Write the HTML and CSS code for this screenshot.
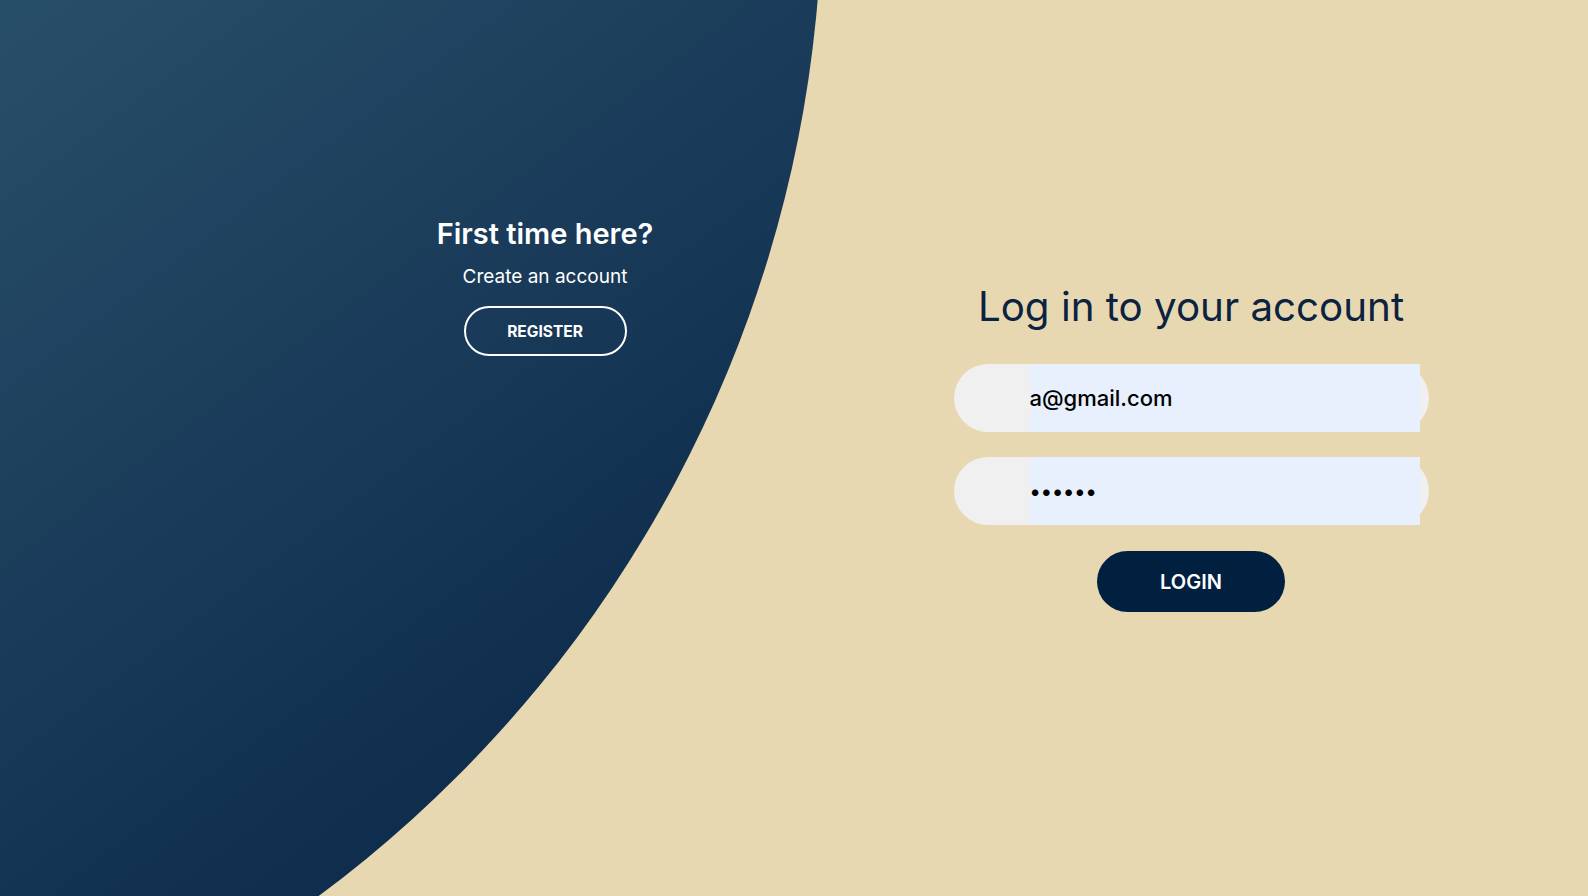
FILE: index.html
```html
<!DOCTYPE html>
<html lang="en">
<head>
<meta charset="utf-8">
<title>Log in</title>
<link rel="stylesheet" href="styles.css">
</head>
<body>
<div class="page">
  <div class="blob"></div>
  <section class="panel-left">
    <h3 class="panel-title">First time here?</h3>
    <p class="panel-text">Create an account</p>
    <button class="btn-outline" type="button">REGISTER</button>
  </section>
  <section class="panel-right">
    <form class="login-form">
      <h2 class="form-title">Log in to your account</h2>
      <div class="input-field">
        <span class="icon"></span>
        <input type="email" value="a@gmail.com">
      </div>
      <div class="input-field">
        <span class="icon"></span>
        <input type="password" value="123456">
      </div>
      <button class="btn-solid" type="button">LOGIN</button>
    </form>
  </section>
</div>
</body>
</html>
```
FILE: styles.css
```css
* { box-sizing: border-box; }
html, body { margin: 0; padding: 0; }
body {
  background: #e8d8b1;
  font-family: Inter, "Noto Sans", sans-serif;
  overflow: hidden;
}
.page {
  position: relative;
  height: 100vh;
  display: grid;
  grid-template-columns: 1fr 1fr;
}
.blob {
  position: absolute;
  inset: 0;
  clip-path: circle(1245px at -423px -104px);
  background: linear-gradient(143deg, #284f6a 0%, #0f2d4d 54%, #04213f 100%);
  z-index: 0;
}
.panel-left {
  position: relative;
  z-index: 1;
  display: flex;
  flex-direction: column;
  align-items: center;
  padding-top: 216px;
  padding-left: 296px;
  color: #fff;
}
.panel-title {
  margin: 0;
  font-size: 29px;
  line-height: 36px;
  font-weight: 600;
}
.panel-text {
  margin: 13px 0 0;
  font-size: 19px;
  line-height: 23px;
  font-weight: 400;
}
.btn-outline {
  margin-top: 18px;
  width: 163px;
  height: 50px;
  border: 2px solid #fff;
  border-radius: 25px;
  background: transparent;
  color: #fff;
  font-family: Inter, sans-serif;
  font-size: 15.5px;
  font-weight: 700;
}
.panel-right {
  position: relative;
  z-index: 1;
  display: flex;
  justify-content: center;
  padding-top: 281px;
}
.login-form {
  display: flex;
  flex-direction: column;
  align-items: center;
}
.form-title {
  margin: 0 0 31px;
  font-size: 40.3px;
  line-height: 52px;
  font-weight: 400;
  color: #0b2240;
}
.input-field {
  width: 475px;
  height: 68px;
  border-radius: 34px;
  background: #f0f0f0;
  display: grid;
  grid-template-columns: 67px 1fr;
  padding: 0 9px;
  margin-bottom: 25px;
}
.input-field input {
  border: none;
  outline: none;
  padding: 0;
  height: 68px;
  background: #e8f0fe;
  font-family: Inter, sans-serif;
  font-size: 22px;
  font-weight: 500;
  color: #000;
}
.input-field input[type="password"] {
  font-size: 21px;
}
.btn-solid {
  margin-top: 1px;
  width: 188px;
  height: 61px;
  border: none;
  border-radius: 31px;
  background: #012040;
  color: #fff;
  font-family: Inter, sans-serif;
  font-size: 20px;
  font-weight: 600;
}
```
